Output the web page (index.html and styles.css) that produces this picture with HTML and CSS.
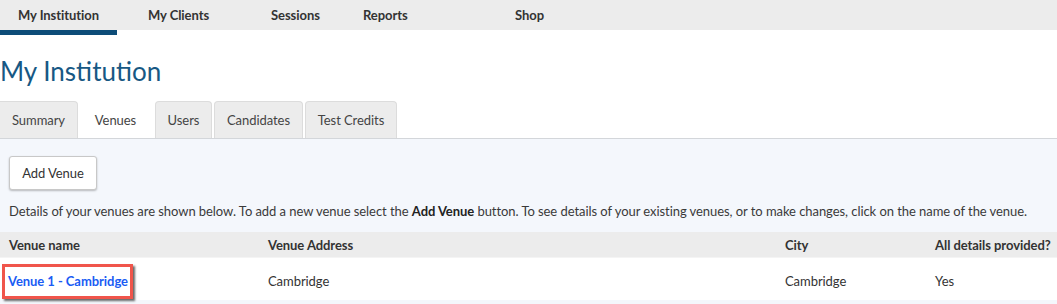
FILE: index.html
```html
<!DOCTYPE html>
<html lang="en">
<head>
<meta charset="utf-8">
<title>My Institution</title>
<link rel="stylesheet" href="styles.css">
</head>
<body>
<nav class="topnav">
  <div class="nav-cell"><a class="nav-item active">My Institution</a></div>
  <div class="nav-cell"><a class="nav-item">My Clients</a></div>
  <div class="nav-cell"><a class="nav-item">Sessions</a></div>
  <div class="nav-cell"><a class="nav-item">Reports</a></div>
  <div class="nav-cell"><a class="nav-item">Shop</a></div>
</nav>
<h1 class="page-title">My Institution</h1>
<div class="tabs">
  <a class="tab t-summary">Summary</a>
  <a class="tab t-venues active">Venues</a>
  <a class="tab t-users">Users</a>
  <a class="tab t-cand">Candidates</a>
  <a class="tab t-credits">Test Credits</a>
</div>
<section class="panel">
  <button class="btn">Add Venue</button>
  <p class="desc">Details of your venues are shown below. To add a new venue select the <b>Add Venue</b> button. To see details of your existing venues, or to make changes, click on the name of the venue.</p>
</section>
<div class="table">
  <div class="row head">
    <div class="c1">Venue name</div>
    <div class="c2">Venue Address</div>
    <div class="c3">City</div>
    <div class="c4">All details provided?</div>
  </div>
  <div class="row body">
    <div class="c1"><span class="hl"><a class="venue-link">Venue 1 - Cambridge</a></span></div>
    <div class="c2">Cambridge</div>
    <div class="c3">Cambridge</div>
    <div class="c4">Yes</div>
  </div>
  <div class="foot"></div>
</div>
</body>
</html>
```
FILE: styles.css
```css
* { box-sizing: border-box; }
html, body { margin: 0; padding: 0; background: #fff; }
body {
  font-family: "Lato", "Open Sans", sans-serif;
  font-size: 13px;
  letter-spacing: -0.06px;
  color: #333;
  width: 1057px;
  overflow: hidden;
}
.topnav {
  display: grid;
  grid-template-columns: 148px 123px 92px 152px 1fr;
  height: 30px;
  background: #ececec;
}
.nav-item {
  display: block;
  height: 30px;
  line-height: 30px;
  font-weight: 700;
  font-size: 13px;
  color: #333;
  white-space: nowrap;
}
.nav-item.active {
  width: 117px;
  text-align: center;
  height: 35px;
  border-bottom: 5px solid #0d4c78;
}
.page-title {
  margin: 25px 0 0 0;
  font-size: 26px;
  line-height: 32px;
  font-weight: 400;
  letter-spacing: 0;
  color: #175884;
}
.tabs {
  display: flex;
  gap: 2px;
  margin-top: 14px;
  height: 37px;
  align-items: flex-end;
}
.tab {
  display: block;
  height: 37px;
  line-height: 36px;
  text-align: center;
  background: #ececec;
  border: 1px solid #dcdcdc;
  border-bottom: none;
  border-radius: 4px 4px 0 0;
  color: #444;
  font-size: 13px;
  white-space: nowrap;
}
.t-summary { width: 78px; border-left: none; border-radius: 0 4px 0 0; }
.t-venues { width: 75px; margin-left: -2px; }
.t-users { width: 57px; }
.t-cand { width: 89px; }
.t-credits { width: 92px; }
.tab.active {
  background: #fff;
  border-color: #fff;
}
.panel {
  background: #f4f7fc;
  border-top: 1px solid #d3d6da;
  padding: 17px 9px 0 9px;
  height: 94px;
}
.btn {
  display: block;
  height: 34px;
  width: 88px;
  background: #fff;
  border: 1px solid #c8c8c8;
  border-radius: 3px;
  box-shadow: 0 1px 2px rgba(0,0,0,0.25);
  font-family: inherit;
  font-size: 13px;
  letter-spacing: -0.06px;
  color: #333;
  padding: 0;
}
.desc {
  margin: 12px 0 0 0;
  line-height: 18px;
  white-space: nowrap;
  color: #3a3a3a;
}
.desc b { font-weight: 700; color: #222; }
.row {
  display: grid;
  grid-template-columns: 259px 517px 150px 1fr;
  padding-left: 9px;
  align-items: center;
}
.row.head {
  height: 25px;
  background: #ececec;
  font-weight: 700;
  color: #333;
}
.row.body {
  height: 43px;
  padding-top: 4px;
  background: #fff;
  border-top: 1px solid #f4f4f4;
}
.foot { height: 4px; background: #f4f7fc; }
.hl {
  display: inline-block;
  margin-left: -7px;
  padding: 6px 2px 6px 3px;
  border: 3px solid #f0554b;
  box-shadow: 2px 2px 2px rgba(40,40,40,0.7);
  background: #fff;
  line-height: 17px;
}
.venue-link {
  color: #1a5cf4;
  font-weight: 700;
}
```
